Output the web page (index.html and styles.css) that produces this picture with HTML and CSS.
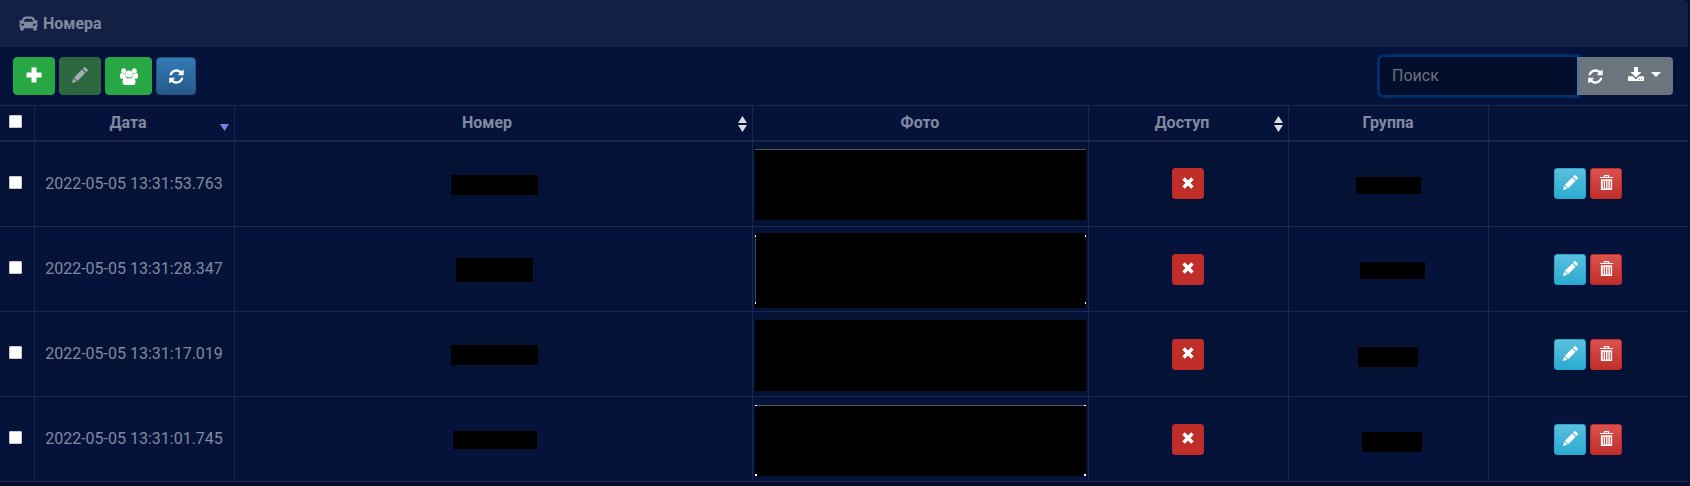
FILE: index.html
```html
<!DOCTYPE html>
<html lang="ru">
<head>
<meta charset="utf-8">
<title>Номера</title>
<link rel="stylesheet" href="styles.css">
</head>
<body>
<svg class="sprite" aria-hidden="true">
  <symbol id="car" viewBox="0 0 512 512"><path d="M499.99 176h-59.87l-16.64-41.6C406.38 91.63 365.57 64 319.5 64h-127c-46.06 0-86.88 27.63-103.99 70.4L71.87 176H12.01C4.2 176-1.53 183.34.37 190.91l6 24C7.7 220.25 12.5 224 18.01 224h20.07C24.65 235.73 16 252.78 16 272v48c0 16.12 6.16 30.67 16 41.93V416c0 17.67 14.33 32 32 32h32c17.67 0 32-14.33 32-32v-32h256v32c0 17.67 14.33 32 32 32h32c17.67 0 32-14.33 32-32v-54.07c9.84-11.25 16-25.8 16-41.93v-48c0-19.22-8.65-36.27-22.07-48H494c5.51 0 10.31-3.75 11.64-9.09l6-24c1.89-7.57-3.84-14.91-11.65-14.91zm-352.06-17.83c7.29-18.22 24.94-30.17 44.57-30.17h127c19.63 0 37.28 11.95 44.57 30.17L384 208H128l19.93-49.83zM96 319.8c-19.2 0-32-12.76-32-31.9S76.8 256 96 256s48 28.71 48 47.85-28.8 15.95-48 15.95zm320 0c-19.2 0-48 3.19-48-15.95S396.8 256 416 256s32 12.76 32 31.9-12.8 31.9-32 31.9z"/></symbol>
  <symbol id="plus" viewBox="0 0 16 16"><path d="M5.500.5h5v5h5v5h-5v5h-5v-5h-5v-5h5z"/></symbol>
  <symbol id="pencil" viewBox="0 0 16 16"><path d="M0 16l1.300-4.700 3.400 3.400zM2 10.500l7.900-7.900 3.500 3.500-7.900 7.900zM10.700 1.800l1.300-1.300q.8-.8 1.600 0l1.900 1.900q.8.800 0 1.600l-1.300 1.300z"/></symbol>
  <symbol id="users" viewBox="0 0 18 17"><circle cx="3.700" cy="2.700" r="2.500"/><circle cx="14.300" cy="2.700" r="2.500"/><path d="M0 9V7q0-2 1.500-2.300 2 1.300 4 .6-.5 2.500.8 4-1 .6-2 1.400H1.500Q0 10.500 0 9zM18 9V7q0-2-1.500-2.300-2 1.300-4 .6.500 2.500-.8 4 1 .6 2 1.400h2.800Q18 10.500 18 9z"/><circle cx="9" cy="6" r="3.500"/><path d="M5.400 9.200q3.600 2.600 7.200 0 2.900.8 2.900 4.800 0 3-2.500 3H5q-2.500 0-2.500-3 0-4 2.900-4.800z"/></symbol>
  <symbol id="refresh" viewBox="100 100 1600 1600"><path d="M1639 1056q0 5-1 7-64 268-268 434.500t-478 166.500q-146 0-282.500-55t-243.500-157l-129 129q-19 19-45 19t-45-19-19-45v-448q0-26 19-45t45-19h448q26 0 45 19t19 45-19 45l-137 137q71 66 161 102t187 36q134 0 250-65t186-179q11-17 53-117 8-23 30-23h192q13 0 22.500 9.500t9.500 22.500zm25-800v448q0 26-19 45t-45 19h-448q-26 0-45-19t-19-45 19-45l138-138q-148-137-349-137-134 0-250 65t-186 179q-11 17-53 117-8 23-30 23h-199q-13 0-22.500-9.500t-9.500-22.500v-7q65-268 270-434.500t480-166.500q146 0 284 55.500t245 156.500l130-129q19-19 45-19t45 19 19 45z"/></symbol>
  <symbol id="download" viewBox="0 0 16 16"><path d="M6 1h4v5h3.500L8 11.500 2.500 6H6z"/><path fill-rule="evenodd" d="M1 10.200h3.700L8 13.400l3.300-3.200H15q1 0 1 1V14q0 1-1 1H1q-1 0-1-1v-2.800q0-1 1-1zM11 12.800v1h1v-1zM13.200 12.800v1h1v-1z"/></symbol>
  <symbol id="cross" viewBox="0 0 12 12"><path d="M2.800.3L6 3.500 9.200.3l2.500 2.500L8.500 6l3.200 3.200-2.500 2.500L6 8.500l-3.200 3.200L.3 9.200 3.500 6 .3 2.800z"/></symbol>
  <symbol id="trash" viewBox="0 0 14 16"><path fill-rule="evenodd" d="M4 2V1q0-1 1-1h4q1 0 1 1v1h4v1.300H0V2zM5.200 1.200V2h3.600v-.8zM1 4.500h12V16H1zM3 6v8.500h1V6zM5.500 6v8.500h1V6zM8 6v8.500h1V6zM10.500 6v8.500h1V6z"/></symbol>
</svg>

<main class="card">
  <header class="card-header"><svg class="icon"><use href="#car"/></svg><h1 class="card-title">Номера</h1></header>

  <div class="toolbar">
    <div class="actions">
      <button class="btn btn-success" type="button" aria-label="Добавить"><svg class="icon"><use href="#plus"/></svg></button>
      <button class="btn btn-success" type="button" aria-label="Изменить" disabled><svg class="icon"><use href="#pencil"/></svg></button>
      <button class="btn btn-success btn-wide" type="button" aria-label="Группы"><svg class="icon icon-lg"><use href="#users"/></svg></button>
      <button class="btn btn-primary" type="button" aria-label="Обновить"><svg class="icon-sm"><use href="#refresh"/></svg></button>
    </div>
    <div class="search-group">
      <input class="search" type="text" placeholder="Поиск" aria-label="Поиск" autofocus>
      <div class="btn-group">
        <button class="btn btn-secondary" type="button" aria-label="Обновить"><svg class="icon-sm"><use href="#refresh"/></svg></button>
        <button class="btn btn-secondary btn-export" type="button" aria-label="Экспорт"><svg class="icon"><use href="#download"/></svg><span class="caret"></span></button>
      </div>
    </div>
  </div>

  <table class="table">
    <colgroup><col class="col-check"><col class="col-std"><col><col class="col-photo"><col class="col-std"><col class="col-std"><col class="col-std"></colgroup>
    <thead>
      <tr>
        <th><input class="check" type="checkbox" aria-label="Выбрать все"></th>
        <th class="sortable"><div class="th-inner">Дата<svg class="sort" viewBox="0 0 9 16"><path class="sort-active" d="M0 8h9L4.500 15z"/></svg></div></th>
        <th class="sortable"><div class="th-inner">Номер<svg class="sort" viewBox="0 0 9 16"><path d="M0 7h9L4.500 0zM0 9h9L4.500 16z"/></svg></div></th>
        <th>Фото</th>
        <th class="sortable"><div class="th-inner">Доступ<svg class="sort" viewBox="0 0 9 16"><path d="M0 7h9L4.500 0zM0 9h9L4.500 16z"/></svg></div></th>
        <th>Группа</th>
        <th></th>
      </tr>
    </thead>
    <tbody>
      <tr>
        <td><input class="check" type="checkbox" aria-label="Выбрать строку"></td>
        <td>2022-05-05 13:31:53.763</td>
        <td class="number-cell"><div class="mask number"></div></td>
        <td class="photo-cell"><div class="mask photo edge-top"></div></td>
        <td><button class="btn btn-sm btn-deny" type="button" aria-label="Доступ запрещён"><svg class="icon-cross"><use href="#cross"/></svg></button></td>
        <td><div class="mask group"></div></td>
        <td><div class="row-actions"><button class="btn btn-sm btn-info" type="button" aria-label="Изменить"><svg class="icon-sm"><use href="#pencil"/></svg></button><button class="btn btn-sm btn-danger" type="button" aria-label="Удалить"><svg class="icon-sm"><use href="#trash"/></svg></button></div></td>
      </tr>
      <tr>
        <td><input class="check" type="checkbox" aria-label="Выбрать строку"></td>
        <td>2022-05-05 13:31:28.347</td>
        <td class="number-cell"><div class="mask number number-tall"></div></td>
        <td class="photo-cell"><div class="mask photo photo-tall edge-sides"></div></td>
        <td><button class="btn btn-sm btn-deny" type="button" aria-label="Доступ запрещён"><svg class="icon-cross"><use href="#cross"/></svg></button></td>
        <td><div class="mask group group-shift"></div></td>
        <td><div class="row-actions"><button class="btn btn-sm btn-info" type="button" aria-label="Изменить"><svg class="icon-sm"><use href="#pencil"/></svg></button><button class="btn btn-sm btn-danger" type="button" aria-label="Удалить"><svg class="icon-sm"><use href="#trash"/></svg></button></div></td>
      </tr>
      <tr>
        <td><input class="check" type="checkbox" aria-label="Выбрать строку"></td>
        <td>2022-05-05 13:31:17.019</td>
        <td class="number-cell"><div class="mask number"></div></td>
        <td class="photo-cell"><div class="mask photo"></div></td>
        <td><button class="btn btn-sm btn-deny" type="button" aria-label="Доступ запрещён"><svg class="icon-cross"><use href="#cross"/></svg></button></td>
        <td><div class="mask group group-tall"></div></td>
        <td><div class="row-actions"><button class="btn btn-sm btn-info" type="button" aria-label="Изменить"><svg class="icon-sm"><use href="#pencil"/></svg></button><button class="btn btn-sm btn-danger" type="button" aria-label="Удалить"><svg class="icon-sm"><use href="#trash"/></svg></button></div></td>
      </tr>
      <tr>
        <td><input class="check" type="checkbox" aria-label="Выбрать строку"></td>
        <td>2022-05-05 13:31:01.745</td>
        <td class="number-cell"><div class="mask number number-short"></div></td>
        <td class="photo-cell"><div class="mask photo edge-corners"></div></td>
        <td><button class="btn btn-sm btn-deny" type="button" aria-label="Доступ запрещён"><svg class="icon-cross"><use href="#cross"/></svg></button></td>
        <td><div class="mask group group-tall group-shift"></div></td>
        <td><div class="row-actions"><button class="btn btn-sm btn-info" type="button" aria-label="Изменить"><svg class="icon-sm"><use href="#pencil"/></svg></button><button class="btn btn-sm btn-danger" type="button" aria-label="Удалить"><svg class="icon-sm"><use href="#trash"/></svg></button></div></td>
      </tr>
    </tbody>
  </table>
</main>
</body>
</html>
```

FILE: styles.css
```css
* { box-sizing: border-box; }

body {
  margin: 0;
  background: #030e2e;
  color: #8189a0;
  font: 16px/24px Roboto, "Liberation Sans", sans-serif;
}

.sprite { display: none; }

.card {
  margin-right: 2px;
  background: #05133b;
  border-radius: 0 4px 0 0;
  overflow: hidden;
}

.card-header {
  display: flex;
  align-items: center;
  gap: 5px;
  height: 47px;
  padding: 0 19px;
  background: #122044;
}

.card-title {
  margin: 0;
  font-size: 16px;
  font-weight: 700;
}

.icon { width: 16px; height: 16px; fill: currentColor; }
.card-header .icon { width: 19px; height: 19px; }
.icon-lg { width: 18px; height: 17px; fill: currentColor; }
.icon-sm { width: 15px; height: 15px; fill: currentColor; }
.icon-cross { width: 12px; height: 12px; fill: currentColor; }

.toolbar {
  display: flex;
  justify-content: space-between;
  padding: 10px 15px 10px 13px;
}

.actions { display: flex; gap: 4px; }

.btn {
  display: inline-flex;
  align-items: center;
  justify-content: center;
  width: 42px;
  height: 38px;
  padding: 0 0 3px;
  border: 1px solid transparent;
  border-radius: 4px;
  color: #fff;
}

.btn-success { background: #28a745; border-color: #28a745; }
.btn-success:disabled { background: #2b683f; border-color: #286a3e; color: #a6adb9; }
.btn-wide { width: 47px; padding: 0; }
.btn-primary {
  width: 40px;
  padding: 0;
  background: linear-gradient(#337ab7, #265a88);
  border-color: #245580;
}

.search-group { display: flex; }

.search {
  width: 197px;
  height: 38px;
  padding: 5px 11px 7px;
  border: 1px solid #030d2c;
  border-radius: 4px 0 0 4px;
  background: #030d2c;
  color: #8189a0;
  caret-color: #a0a6b5;
  font: inherit;
}
.search::placeholder { color: #6c757d; opacity: 1; }
.search:focus {
  position: relative;
  outline: none;
  box-shadow: 0 0 0 3px rgba(0, 123, 255, .25);
}

.btn-group { display: flex; margin-left: -1px; }
.btn-secondary { width: 39px; padding: 0; background: #6c757d; border-radius: 0; }
.btn-export { width: 58px; gap: 7px; padding-bottom: 4px; border-radius: 0 4px 4px 0; }

.caret {
  border: 5px solid transparent;
  border-top-color: currentColor;
  border-bottom: 0;
}

.table {
  width: 100%;
  table-layout: fixed;
  border-collapse: collapse;
  text-align: center;
}

.col-check { width: 34px; }
.col-std { width: 200px; }
.col-photo { width: 336px; }

th, td {
  padding: 0;
  border: 1px solid #1c294d;
  vertical-align: middle;
}
th:first-child, td:first-child { border-left: 0; }
th:last-child, td:last-child { border-right: 0; }
th { height: 35px; border-bottom-width: 2px; font-weight: 700; }
td { height: 85px; }
tbody tr:first-child td { height: 86px; }
tbody tr:nth-child(odd) { background: #041236; }

.th-inner {
  position: relative;
  padding: 0 24px 0 12px;
}

.sort {
  position: absolute;
  top: 5px;
  right: 5px;
  width: 9px;
  height: 16px;
  fill: #d9dbe0;
}
.sort-active { fill: #7b7fe0; }

.check {
  appearance: none;
  display: block;
  width: 13px;
  height: 13px;
  margin: 0 0 3px 9px;
  border: 1px solid #c8c8c8;
  border-radius: 1px;
  background: #fff;
}
.check:checked { background: #0075ff; }

.mask { margin: 0 auto; background: #000; }

.number-cell { padding: 2px 0 0 3px; }
.number { width: 87px; height: 20px; }
.number-tall { width: 77px; height: 24px; }
.number-short { width: 84px; height: 18px; }

.group { width: 65px; height: 17px; margin-top: 3px; }
.group-tall { width: 60px; height: 20px; margin-top: 6px; }
.group-shift { position: relative; left: 4px; }

.photo-cell { padding: 2px 2px 0; }
.photo { height: 71px; }
.photo-tall { height: 75px; }
.edge-top { border-top: 1px solid #555; }
.edge-sides {
  background:
    linear-gradient(#fff, #fff) left 0 top 2px / 1px 2px no-repeat,
    linear-gradient(#fff, #fff) right 0 top 2px / 1px 2px no-repeat,
    linear-gradient(#fff, #fff) left 0 bottom 4px / 1px 2px no-repeat,
    linear-gradient(#fff, #fff) right 0 bottom 4px / 1px 2px no-repeat,
    linear-gradient(#444, #444) left center / 1px 67px no-repeat,
    #000;
}
.edge-corners {
  background:
    linear-gradient(#fff, #fff) left top / 2px 1px no-repeat,
    linear-gradient(#fff, #fff) right top / 2px 1px no-repeat,
    linear-gradient(#fff, #fff) left bottom / 2px 2px no-repeat,
    linear-gradient(#fff, #fff) right bottom / 2px 2px no-repeat,
    linear-gradient(#555, #555) left top / 100% 1px no-repeat,
    #000;
}

.btn-sm { width: 32px; height: 31px; padding: 0 0 2px; border-radius: 3px; vertical-align: middle; }
.btn-deny { background: #c12e2a; border-color: #b92c28; }
.btn-info { background: linear-gradient(#5bc0de, #2aabd2); border-color: #28a4c9; }
.btn-danger { background: linear-gradient(#d9534f, #c12e2a); border-color: #b92c28; }

.row-actions { display: flex; justify-content: center; gap: 4px; }
```
